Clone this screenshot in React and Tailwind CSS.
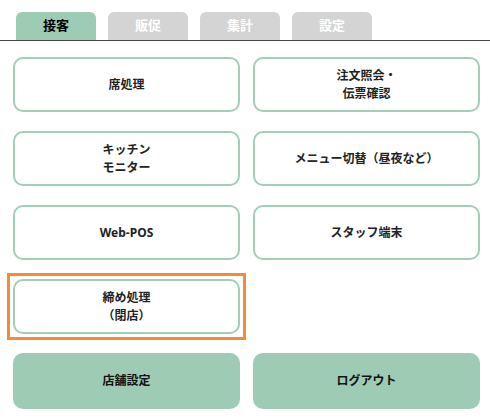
import React from "react"

const tabs = ["接客", "販促", "集計", "設定"]

const Btn = ({ children }) => (
  <button className="w-full h-[55px] rounded-[10px] border-2 border-[#a0cfb7] bg-white text-[12px] font-bold leading-[18px] text-[#222]">
    {children}
  </button>
)

export default function App() {
  return (
    <div className="w-[490px] h-[419px] bg-white" style={{ fontFamily: '"Noto Sans", "Noto Sans CJK JP", sans-serif' }}>
      <div className="flex gap-[12px] pl-[16px] pt-[12px] border-b border-[#444]">
        {tabs.map((t, i) => (
          <div
            key={t}
            className={
              "w-[80px] h-[28px] rounded-t-[6px] flex items-center justify-center text-[13px] font-bold " +
              (i === 0 ? "bg-[#9ecbb3] text-black" : "bg-[#d4d4d4] text-white")
            }
          >
            {t}
          </div>
        ))}
      </div>
      <div className="grid grid-cols-2 gap-x-[13px] gap-y-[19px] pl-[13px] pr-[10px] pt-[16px]">
        <Btn>席処理</Btn>
        <Btn>
          注文照会・
          <br />
          伝票確認
        </Btn>
        <Btn>
          キッチン
          <br />
          モニター
        </Btn>
        <Btn>メニュー切替（昼夜など）</Btn>
        <Btn>Web-POS</Btn>
        <Btn>スタッフ端末</Btn>
        <div className="-m-[6px] border-[3px] border-[#f58a3b] p-[3px]">
          <Btn>
            締め処理
            <br />
            （閉店）
          </Btn>
        </div>
        <div />
        <button className="h-[56px] rounded-[10px] bg-[#9ecbb3] text-[12px] font-bold text-[#111]">店舗設定</button>
        <button className="h-[56px] rounded-[10px] bg-[#9ecbb3] text-[12px] font-bold text-[#111]">ログアウト</button>
      </div>
    </div>
  )
}
